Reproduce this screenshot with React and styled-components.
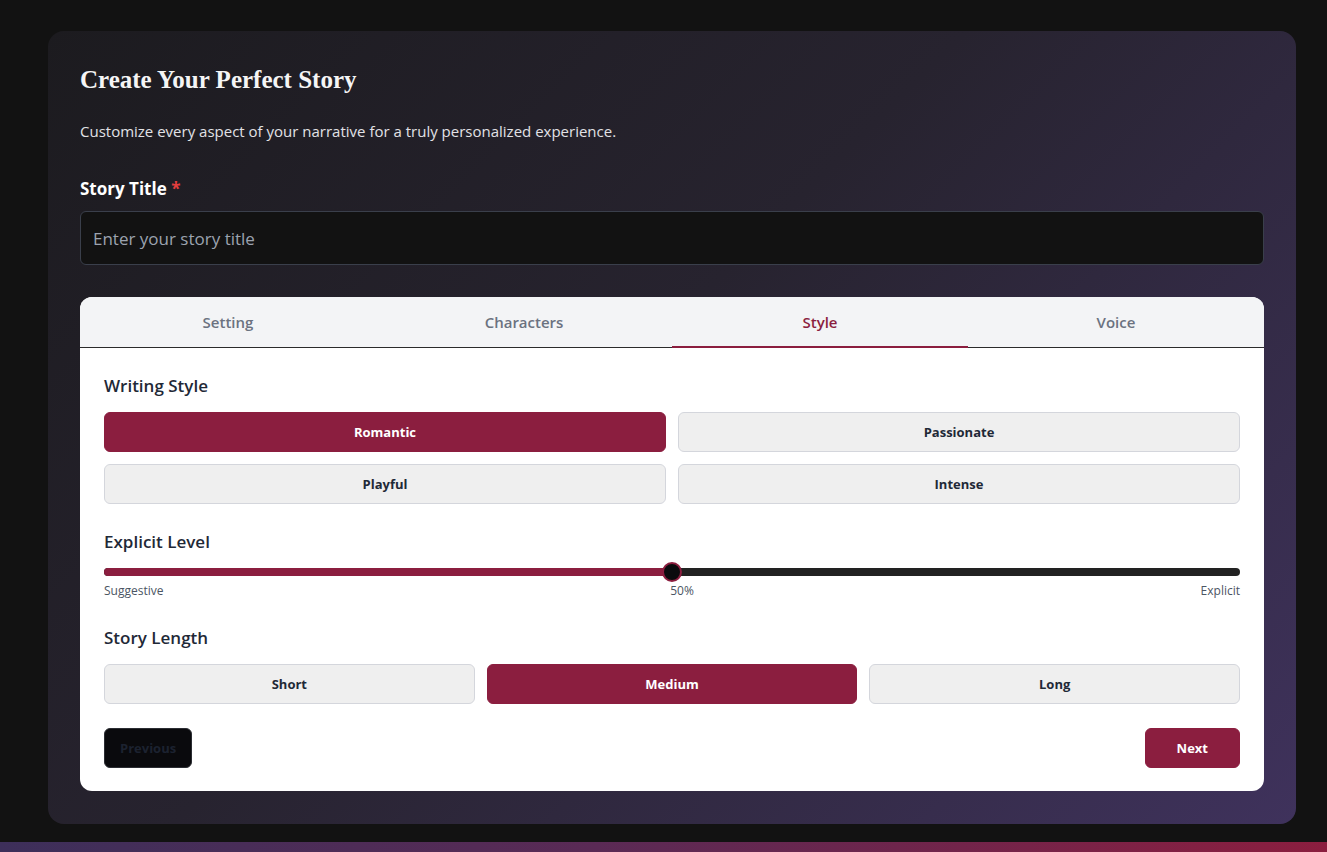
import React, { useState } from 'react'
import styled, { createGlobalStyle } from 'styled-components'

const crimson = '#8b1e3f'

const GlobalStyle = createGlobalStyle`
  html, body {
    margin: 0;
    padding: 0;
    background: #121212;
    font-family: "Open Sans", "Noto Sans", sans-serif;
  }
  * { box-sizing: border-box; }
`

const Page = styled.div`
  height: 852px;
  display: flex;
  flex-direction: column;
  overflow: hidden;
`

const Card = styled.div`
  margin: 31px 31px 18px 48px;
  padding: 32px 32px 33px;
  border-radius: 16px;
  background: linear-gradient(135deg, #1c1b1f 0%, #27232f 45%, #3f325c 100%);
`

const Title = styled.h1`
  margin: 0;
  font-family: "Liberation Serif", "DejaVu Serif", serif;
  font-weight: 700;
  font-size: 25px;
  line-height: 34px;
  color: #f5f5f5;
`

const Subtitle = styled.p`
  margin: 22px 0 0;
  font-size: 15px;
  line-height: 24px;
  color: #e2e2e6;
`

const Label = styled.label`
  display: block;
  margin-top: 34px;
  font-size: 17px;
  line-height: 24px;
  font-weight: 700;
  color: #ffffff;

  span { color: #e53e3e; }
`

const TitleInput = styled.input`
  display: block;
  width: 100%;
  height: 54px;
  margin-top: 10px;
  padding: 0 12px;
  background: #121212;
  border: 1px solid #3a3f4b;
  border-radius: 6px;
  font-family: inherit;
  font-size: 17px;
  color: #f5f5f5;
  outline: none;

  &::placeholder { color: #9ca3af; }
`

const Panel = styled.div`
  margin-top: 32px;
  background: #ffffff;
  border-radius: 12px;
  overflow: hidden;
`

const TabBar = styled.div`
  display: grid;
  grid-template-columns: repeat(4, 1fr);
  height: 51px;
  background: #f3f4f6;
  border-bottom: 1px solid #2b2b2b;
`

const Tab = styled.button`
  position: relative;
  border: none;
  background: transparent;
  font-family: inherit;
  font-size: 15px;
  font-weight: 600;
  color: ${p => (p.$active ? crimson : '#6b7280')};
  cursor: pointer;

  &::after {
    content: '';
    position: absolute;
    left: 0;
    right: 0;
    bottom: -1px;
    height: 2px;
    background: ${p => (p.$active ? crimson : 'transparent')};
  }
`

const Body = styled.div`
  padding: 24px 24px 23px;
`

const SectionTitle = styled.h3`
  margin: ${p => p.$first ? '0' : '24px'} 0 12px;
  font-size: 17px;
  line-height: 28px;
  font-weight: 600;
  color: #1f2937;
`

const OptionGrid = styled.div`
  display: grid;
  grid-template-columns: repeat(${p => p.$cols}, 1fr);
  gap: 12px;
`

const Option = styled.button`
  height: 40px;
  border-radius: 6px;
  border: 1px solid ${p => (p.$active ? crimson : '#d4d6dc')};
  background: ${p => (p.$active ? crimson : '#efefef')};
  color: ${p => (p.$active ? '#ffffff' : '#1f2937')};
  font-family: inherit;
  font-size: 13px;
  font-weight: 700;
  cursor: pointer;
`

const SliderWrap = styled.div`
  padding-bottom: 1px;
`

const Track = styled.div`
  position: relative;
  height: 8px;
  border-radius: 4px;
  background: #222222;
`

const Fill = styled.div`
  height: 100%;
  border-radius: 4px 0 0 4px;
  background: ${crimson};
`

const Thumb = styled.div`
  position: absolute;
  top: 50%;
  width: 20px;
  height: 20px;
  margin: -10px 0 0 -10px;
  border-radius: 50%;
  background: #0b0b0e;
  border: 2px solid ${crimson};
`

const SliderLabels = styled.div`
  display: flex;
  justify-content: space-between;
  margin-top: 7px;
  font-size: 12px;
  line-height: 16px;
  color: #4b5563;
`

const Nav = styled.div`
  display: flex;
  justify-content: space-between;
  margin-top: 24px;
`

const NavButton = styled.button`
  height: 40px;
  padding: 0 ${p => (p.$primary ? '31px' : '15px')};
  border-radius: 6px;
  border: 1px solid ${p => (p.$primary ? crimson : '#2b2d33')};
  background: ${p => (p.$primary ? crimson : '#0a0a0d')};
  color: ${p => (p.$primary ? '#ffffff' : '#1c2230')};
  font-family: inherit;
  font-size: 13px;
  font-weight: 700;
`

const BottomBar = styled.div`
  height: 10px;
  flex-shrink: 0;
  background: linear-gradient(90deg, #3d2f5a 0%, #5a2a55 45%, ${crimson} 100%);
`

const tabs = ['Setting', 'Characters', 'Style', 'Voice']
const styles = ['Romantic', 'Passionate', 'Playful', 'Intense']
const lengths = ['Short', 'Medium', 'Long']

export default function App() {
  const [tab, setTab] = useState('Style')
  const [style, setStyle] = useState('Romantic')
  const [length, setLength] = useState('Medium')
  const level = 50

  return (
    <Page>
      <GlobalStyle />
      <Card>
        <Title>Create Your Perfect Story</Title>
        <Subtitle>Customize every aspect of your narrative for a truly personalized experience.</Subtitle>
        <Label>Story Title <span>*</span></Label>
        <TitleInput placeholder="Enter your story title" />

        <Panel>
          <TabBar>
            {tabs.map(t => (
              <Tab key={t} $active={t === tab} onClick={() => setTab(t)}>{t}</Tab>
            ))}
          </TabBar>
          <Body>
            <SectionTitle $first>Writing Style</SectionTitle>
            <OptionGrid $cols={2}>
              {styles.map(s => (
                <Option key={s} $active={s === style} onClick={() => setStyle(s)}>{s}</Option>
              ))}
            </OptionGrid>

            <SectionTitle>Explicit Level</SectionTitle>
            <SliderWrap>
              <Track>
                <Fill style={{ width: `${level}%` }} />
                <Thumb style={{ left: `${level}%` }} />
              </Track>
              <SliderLabels>
                <span>Suggestive</span>
                <span>{level}%</span>
                <span>Explicit</span>
              </SliderLabels>
            </SliderWrap>

            <SectionTitle>Story Length</SectionTitle>
            <OptionGrid $cols={3}>
              {lengths.map(l => (
                <Option key={l} $active={l === length} onClick={() => setLength(l)}>{l}</Option>
              ))}
            </OptionGrid>

            <Nav>
              <NavButton disabled>Previous</NavButton>
              <NavButton $primary>Next</NavButton>
            </Nav>
          </Body>
        </Panel>
      </Card>
      <BottomBar />
    </Page>
  )
}
